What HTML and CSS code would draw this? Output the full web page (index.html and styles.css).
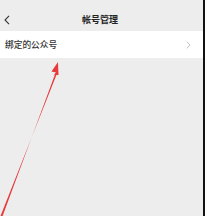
FILE: index.html
```html
<!DOCTYPE html>
<html>
<head>
<meta charset="utf-8">
<link rel="stylesheet" href="styles.css">
</head>
<body>
<div class="screen">
  <div class="status"></div>
  <div class="nav">
    <span class="back">
      <svg width="6" height="10" viewBox="0 0 6 10"><path d="M5 0.8 L1 5 L5 9.2" fill="none" stroke="#333" stroke-width="1.1"/></svg>
    </span>
    <span class="title">帐号管理</span>
  </div>
  <div class="row">
    <span class="label">绑定的公众号</span>
    <svg class="chev" width="5" height="8" viewBox="0 0 5 8"><path d="M0.8 0.6 L4 4 L0.8 7.4" fill="none" stroke="#bbb" stroke-width="0.9"/></svg>
  </div>
  <svg class="arrow" width="205" height="216" viewBox="0 0 205 216">
    <path d="M0.5 216 L2.6 216 L55.5 73 L57 73.5 Z" fill="#e8393b"/>
    <path d="M58 62 L51.5 71.5 L56 72.5 L54 75 L58.5 75 Z" fill="#e8393b"/>
  </svg>
</div>
</body>
</html>
```
FILE: styles.css
```css
html, body {
  margin: 0;
  padding: 0;
  background: #ededed;
}
.screen {
  position: relative;
  width: 203px;
  height: 216px;
  border-right: 2px solid #111;
  background: #ededed;
  font-family: "Noto Sans CJK SC", "Noto Sans", sans-serif;
  overflow: hidden;
}
.status {
  height: 8px;
}
.nav {
  height: 23px;
  display: flex;
  align-items: center;
  justify-content: center;
  position: relative;
}
.back {
  position: absolute;
  left: 4px;
  top: 7px;
  display: flex;
}
.title {
  font-size: 9px;
  font-weight: 700;
  color: #222;
  letter-spacing: 0;
  margin-left: -3px;
}
.row {
  height: 27px;
  background: #fff;
  display: flex;
  align-items: center;
  justify-content: space-between;
  padding: 0 12px 0 5px;
}
.label {
  font-size: 8.7px;
  font-weight: 500;
  color: #333;
}
.arrow {
  position: absolute;
  left: 0;
  top: 0;
}
```
